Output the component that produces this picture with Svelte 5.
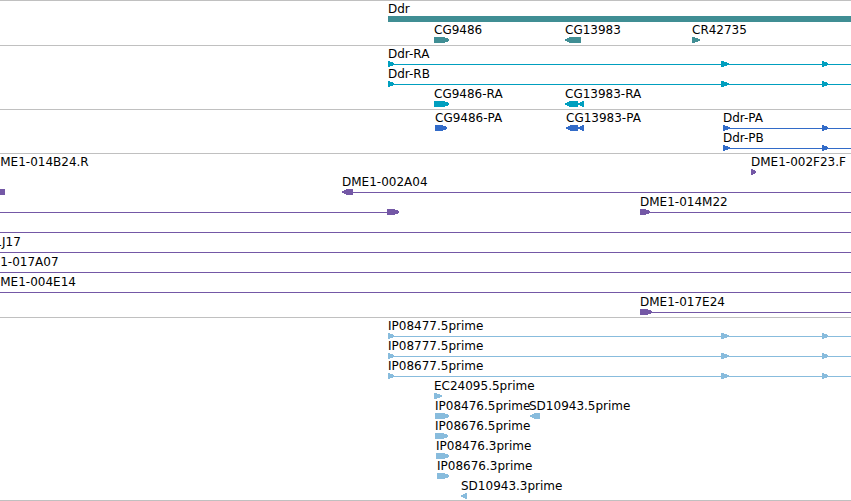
<script lang="ts">
    type Shape = { kind: "box" | "right" | "left" | "line"; from: number; to?: number };
    type Label = { x: number; text: string };
    type Lane = { labels: Label[]; shapes: Shape[] };
    type Track = { name: string; lanes: Lane[] };

    // Small helpers to keep the track data readable
    const box = (from: number, to?: number): Shape => ({ kind: "box", from, to });
    const right = (from: number, to: number): Shape => ({ kind: "right", from, to });
    const left = (from: number, to: number): Shape => ({ kind: "left", from, to });
    const line = (from: number, to?: number): Shape => ({ kind: "line", from, to });
    const label = (x: number, text: string): Label => ({ x, text });

    // A spliced feature that runs past the right edge
    const spliced = (text: string): Lane => ({
        labels: [label(388, text)],
        shapes: [line(388), right(388, 394), right(721, 729), right(822, 828)],
    });

    const protein = [line(723), right(723, 730), right(822, 828)];

    const tracks: Track[] = [
        {
            name: "genes",
            lanes: [
                { labels: [label(388, "Ddr")], shapes: [box(388)] },
                {
                    labels: [label(434, "CG9486"), label(565, "CG13983"), label(692, "CR42735")],
                    shapes: [right(434, 449), left(565, 581), right(692, 700)],
                },
            ],
        },
        {
            name: "transcripts",
            lanes: [
                spliced("Ddr-RA"),
                spliced("Ddr-RB"),
                {
                    labels: [label(434, "CG9486-RA"), label(565, "CG13983-RA")],
                    shapes: [right(434, 449), left(565, 578), left(578, 584)],
                },
            ],
        },
        {
            name: "proteins",
            lanes: [
                {
                    labels: [label(435, "CG9486-PA"), label(566, "CG13983-PA"), label(723, "Ddr-PA")],
                    shapes: [right(435, 447), left(566, 578), left(578, 584), ...protein],
                },
                { labels: [label(723, "Ddr-PB")], shapes: protein },
            ],
        },
        {
            name: "clones",
            lanes: [
                {
                    labels: [label(-9, "DME1-014B24.R"), label(751, "DME1-002F23.F")],
                    shapes: [right(751, 756)],
                },
                {
                    labels: [label(342, "DME1-002A04")],
                    shapes: [box(0, 5), left(342, 353), line(353)],
                },
                {
                    labels: [label(640, "DME1-014M22")],
                    shapes: [line(0, 387), right(387, 399), right(640, 650), line(649)],
                },
                { labels: [], shapes: [line(0)] },
                { labels: [label(-60, "DME1-011J17")], shapes: [line(0)] },
                { labels: [label(-27, "DME1-017A07")], shapes: [line(0)] },
                { labels: [label(-9, "DME1-004E14")], shapes: [line(0)] },
                {
                    labels: [label(640, "DME1-017E24")],
                    shapes: [right(640, 652), line(650)],
                },
            ],
        },
        {
            name: "ests",
            lanes: [
                spliced("IP08477.5prime"),
                spliced("IP08777.5prime"),
                spliced("IP08677.5prime"),
                { labels: [label(434, "EC24095.5prime")], shapes: [right(434, 442)] },
                {
                    labels: [label(435, "IP08476.5prime"), label(529, "SD10943.5prime")],
                    shapes: [right(435, 449), left(530, 540)],
                },
                { labels: [label(435, "IP08676.5prime")], shapes: [right(435, 448)] },
                { labels: [label(436, "IP08476.3prime")], shapes: [right(436, 449)] },
                { labels: [label(437, "IP08676.3prime")], shapes: [right(437, 449)] },
                { labels: [label(461, "SD10943.3prime")], shapes: [left(461, 467)] },
            ],
        },
    ];

    // Arrow outline: short ones are plain triangles, longer ones get a body
    function arrow(kind: string, from: number, to: number): string {
        const width = to - from;
        const head = width <= 8 ? width : 6;
        // Mirror the same outline for features on the reverse strand
        const tip = kind === "right" ? to : from;
        const tail = kind === "right" ? from : to;
        const step = kind === "right" ? -1 : 1;
        const neck = tip + step * (head - 1);
        const bend = tip + step * Math.round(head / 2);
        return `${tail},0 ${neck},0 ${bend},1 ${tip},2 ${tip},4 ${bend},5 ${neck},6 ${tail},6`;
    }
</script>

<main class="browser">
    {#each tracks as track}
        <section class="track {track.name}">
            {#each track.lanes as lane}
                <div class="lane">
                    {#each lane.labels as item}
                        <span class="label" style="left: {item.x}px">{item.text}</span>
                    {/each}
                    <svg class="features" aria-hidden="true">
                        {#each lane.shapes as shape}
                            {#if shape.kind === "box"}
                                <rect
                                    x={shape.from}
                                    y="0"
                                    width={shape.to === undefined ? "100%" : shape.to - shape.from}
                                    height="6"
                                />
                            {:else if shape.kind === "line"}
                                <rect
                                    x={shape.from}
                                    y="3"
                                    width={shape.to === undefined ? "100%" : shape.to - shape.from}
                                    height="1"
                                />
                            {:else}
                                <polygon points={arrow(shape.kind, shape.from, shape.to ?? shape.from)} />
                            {/if}
                        {/each}
                    </svg>
                </div>
            {/each}
        </section>
    {/each}
</main>

<style>
    :global(body) {
        margin: 0;
        background: #fff;
    }

    .browser {
        overflow: hidden;
        border-bottom: 1px solid #c0c0c0;
        font-family: "DejaVu Sans", Verdana, sans-serif;
        font-size: 12px;
        line-height: 16px;
        color: #000;
    }

    /* One horizontal band per kind of feature */
    .track {
        display: flex;
        flex-direction: column;
        border-top: 1px solid #c0c0c0;
        padding-bottom: 3px;
    }

    .lane {
        position: relative;
        display: flex;
        flex-direction: column;
        height: 20px;
        padding-top: 15px;
        box-sizing: border-box;
    }

    /* Labels sit at their feature's start on the sequence */
    .label {
        position: absolute;
        top: 0;
        white-space: nowrap;
    }

    .features {
        display: block;
        flex: none;
        width: 100%;
        height: 6px;
        fill: currentColor;
        shape-rendering: crispEdges;
    }

    .genes {
        gap: 1px;
    }

    .genes .features {
        color: #408e94;
    }

    .transcripts .features {
        color: #009fbf;
    }

    .proteins .features {
        color: #326bc8;
    }

    .clones .features {
        color: #7458a6;
    }

    .ests {
        padding-bottom: 2px;
    }

    .ests .features {
        color: #88bcdd;
    }
</style>
